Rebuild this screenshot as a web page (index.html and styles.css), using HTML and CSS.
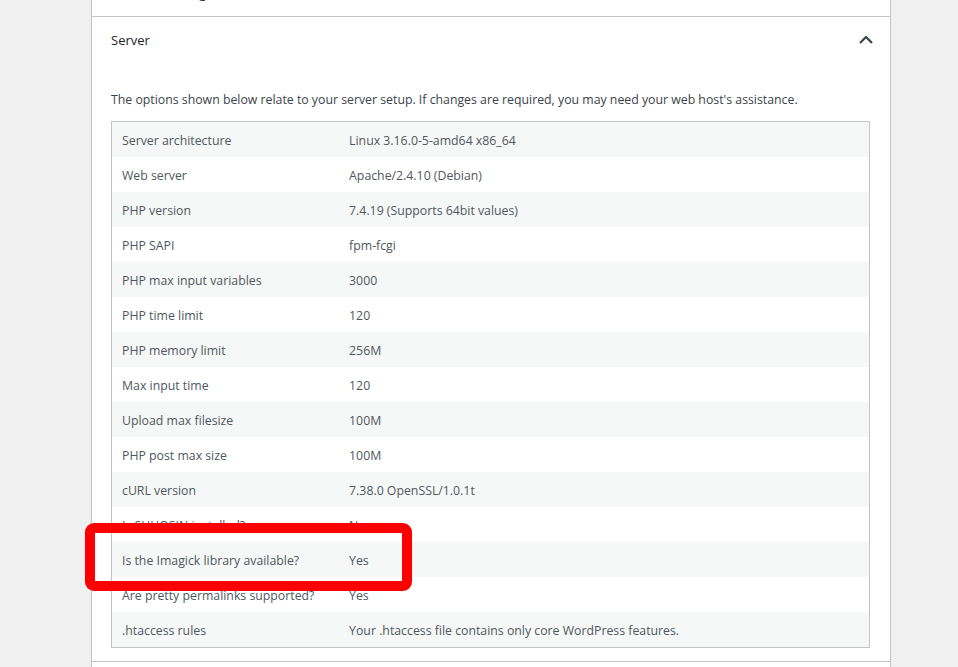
FILE: index.html
```html
<!DOCTYPE html>
<html lang="en">
<head>
  <meta charset="UTF-8">
  <meta name="viewport" content="width=device-width, initial-scale=1.0">
  <title>Site Health Info - Server</title>
  <link rel="stylesheet" href="styles.css">
</head>
<body>
  <div class="wrap">
    <div class="accordion">
      <h3 class="accordion-heading">
        <button type="button" class="accordion-trigger">
          <span class="title">Media Handling</span>
          <svg class="icon" width="14" height="8" viewBox="0 0 14 8"><polyline points="1,1 7,7 13,1" /></svg>
        </button>
      </h3>

      <h3 class="accordion-heading">
        <button type="button" class="accordion-trigger">
          <span class="title">Server</span>
          <svg class="icon" width="14" height="8" viewBox="0 0 14 8"><polyline points="1,7 7,1 13,7" /></svg>
        </button>
      </h3>
      <div class="accordion-panel">
        <p class="description">The options shown below relate to your server setup. If changes are required, you may need your web host's assistance.</p>
        <table class="widefat striped">
          <tbody>
            <tr><td>Server architecture</td><td>Linux 3.16.0-5-amd64 x86_64</td></tr>
            <tr><td>Web server</td><td>Apache/2.4.10 (Debian)</td></tr>
            <tr><td>PHP version</td><td>7.4.19 (Supports 64bit values)</td></tr>
            <tr><td>PHP SAPI</td><td>fpm-fcgi</td></tr>
            <tr><td>PHP max input variables</td><td>3000</td></tr>
            <tr><td>PHP time limit</td><td>120</td></tr>
            <tr><td>PHP memory limit</td><td>256M</td></tr>
            <tr><td>Max input time</td><td>120</td></tr>
            <tr><td>Upload max filesize</td><td>100M</td></tr>
            <tr><td>PHP post max size</td><td>100M</td></tr>
            <tr><td>cURL version</td><td>7.38.0 OpenSSL/1.0.1t</td></tr>
            <tr><td>Is SUHOSIN installed?</td><td>No</td></tr>
            <tr><td>Is the Imagick library available?</td><td>Yes</td></tr>
            <tr><td>Are pretty permalinks supported?</td><td>Yes</td></tr>
            <tr><td>.htaccess rules</td><td>Your .htaccess file contains only core WordPress features.</td></tr>
          </tbody>
        </table>
      </div>

      <h3 class="accordion-heading">
        <button type="button" class="accordion-trigger">
          <span class="title">Database</span>
          <svg class="icon" width="14" height="8" viewBox="0 0 14 8"><polyline points="1,1 7,7 13,1" /></svg>
        </button>
      </h3>
    </div>

    <!-- highlight added on the screenshot -->
    <div class="highlight"></div>
  </div>
</body>
</html>
```

FILE: styles.css
```css
body {
  margin: 0;
  background-color: #f0f0f1;
  font-family: "Open Sans", "Noto Sans", sans-serif;
  font-size: 12.3px;
  color: #3c434a;
  overflow: hidden;
}

.wrap {
  position: relative;
  width: 800px;
  margin: -30px 0 0 91px;
}

.accordion {
  background-color: #fff;
  border: 1px solid #c3c4c7;
  border-top: none;
}

.accordion-heading {
  margin: 0;
  font-size: 13px;
  font-weight: 400;
}

.accordion-heading + .accordion-heading,
.accordion-panel + .accordion-heading {
  border-top: 1px solid #c3c4c7;
}

.accordion-trigger {
  display: flex;
  justify-content: space-between;
  align-items: center;
  width: 100%;
  height: 46px;
  padding: 0 17px 0 19px;
  border: none;
  background: none;
  font-family: inherit;
  font-size: 13px;
  color: #1d2327;
  text-align: left;
  cursor: pointer;
}

.accordion-trigger .icon {
  fill: none;
  stroke: #3c434a;
  stroke-width: 2.2;
}

.accordion-panel {
  padding: 0 20px 13px 19px;
}

.description {
  margin: 27px 0 11px;
  line-height: 20px;
}

.widefat {
  width: 100%;
  border: 1px solid #c3c4c7;
  border-spacing: 0;
  color: #50575e;
}

.widefat td {
  height: 35px;
  padding: 2px 10px 0;
  box-sizing: border-box;
  vertical-align: middle;
}

.widefat td:first-child {
  width: 30%;
}

.striped tr:nth-child(odd) {
  background-color: #f6f7f7;
}

.highlight {
  position: absolute;
  left: -6px;
  top: 553px;
  width: 327px;
  height: 68px;
  box-sizing: border-box;
  border: 10px solid #ff0000;
  border-radius: 9px;
}
```
